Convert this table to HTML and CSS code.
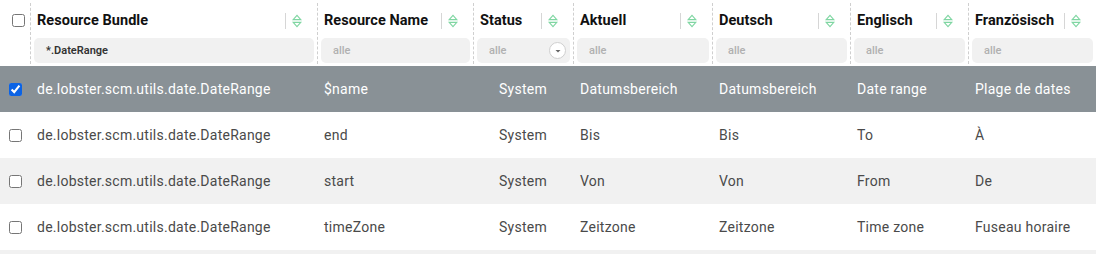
FILE: index.html
```html
<!DOCTYPE html>
<html>
<head>
<meta charset="utf-8">
<link rel="stylesheet" href="styles.css">
</head>
<body>
<div class="table">
  <div class="head">
    <div class="hcell hcheck"><input type="checkbox" class="cb"></div>
    <div class="hcell"><div class="hinner">
      <div class="htitle"><span class="ht">Resource Bundle</span><span class="sdiv"></span><svg class="sort" viewBox="0 0 10 14"><path d="M1.2 5.6 L5 1.3 L8.8 5.6 Z M1.2 8.4 L5 12.7 L8.8 8.4 Z"/></svg></div>
      <div class="filter val">*.DateRange</div>
    </div></div>
    <div class="hcell"><div class="hinner">
      <div class="htitle"><span class="ht">Resource Name</span><span class="sdiv"></span><svg class="sort" viewBox="0 0 10 14"><path d="M1.2 5.6 L5 1.3 L8.8 5.6 Z M1.2 8.4 L5 12.7 L8.8 8.4 Z"/></svg></div>
      <div class="filter">alle</div>
    </div></div>
    <div class="hcell"><div class="hinner">
      <div class="htitle"><span class="ht">Status</span><span class="sdiv"></span><svg class="sort" viewBox="0 0 10 14"><path d="M1.2 5.6 L5 1.3 L8.8 5.6 Z M1.2 8.4 L5 12.7 L8.8 8.4 Z"/></svg></div>
      <div class="filter sel"><span>alle</span><span class="dd"><svg viewBox="0 0 8 8"><path d="M1.5 3 L6.5 3 L4 5.6 Z"/></svg></span></div>
    </div></div>
    <div class="hcell"><div class="hinner">
      <div class="htitle"><span class="ht">Aktuell</span><span class="sdiv"></span><svg class="sort" viewBox="0 0 10 14"><path d="M1.2 5.6 L5 1.3 L8.8 5.6 Z M1.2 8.4 L5 12.7 L8.8 8.4 Z"/></svg></div>
      <div class="filter">alle</div>
    </div></div>
    <div class="hcell"><div class="hinner">
      <div class="htitle"><span class="ht">Deutsch</span><span class="sdiv"></span><svg class="sort" viewBox="0 0 10 14"><path d="M1.2 5.6 L5 1.3 L8.8 5.6 Z M1.2 8.4 L5 12.7 L8.8 8.4 Z"/></svg></div>
      <div class="filter">alle</div>
    </div></div>
    <div class="hcell"><div class="hinner">
      <div class="htitle"><span class="ht">Englisch</span><span class="sdiv"></span><svg class="sort" viewBox="0 0 10 14"><path d="M1.2 5.6 L5 1.3 L8.8 5.6 Z M1.2 8.4 L5 12.7 L8.8 8.4 Z"/></svg></div>
      <div class="filter">alle</div>
    </div></div>
    <div class="hcell"><div class="hinner">
      <div class="htitle"><span class="ht">Französisch</span><span class="sdiv"></span><svg class="sort" viewBox="0 0 10 14"><path d="M1.2 5.6 L5 1.3 L8.8 5.6 Z M1.2 8.4 L5 12.7 L8.8 8.4 Z"/></svg></div>
      <div class="filter">alle</div>
    </div></div>
  </div>

  <div class="row selected">
    <div class="cell ccheck"><input type="checkbox" class="cb" checked></div>
    <div class="cell">de.lobster.scm.utils.date.DateRange</div>
    <div class="cell">$name</div>
    <div class="cell center">System</div>
    <div class="cell">Datumsbereich</div>
    <div class="cell">Datumsbereich</div>
    <div class="cell">Date range</div>
    <div class="cell">Plage de dates</div>
  </div>
  <div class="row">
    <div class="cell ccheck"><input type="checkbox" class="cb"></div>
    <div class="cell">de.lobster.scm.utils.date.DateRange</div>
    <div class="cell">end</div>
    <div class="cell center">System</div>
    <div class="cell">Bis</div>
    <div class="cell">Bis</div>
    <div class="cell">To</div>
    <div class="cell">À</div>
  </div>
  <div class="row alt">
    <div class="cell ccheck"><input type="checkbox" class="cb"></div>
    <div class="cell">de.lobster.scm.utils.date.DateRange</div>
    <div class="cell">start</div>
    <div class="cell center">System</div>
    <div class="cell">Von</div>
    <div class="cell">Von</div>
    <div class="cell">From</div>
    <div class="cell">De</div>
  </div>
  <div class="row">
    <div class="cell ccheck"><input type="checkbox" class="cb"></div>
    <div class="cell">de.lobster.scm.utils.date.DateRange</div>
    <div class="cell">timeZone</div>
    <div class="cell center">System</div>
    <div class="cell">Zeitzone</div>
    <div class="cell">Zeitzone</div>
    <div class="cell">Time zone</div>
    <div class="cell">Fuseau horaire</div>
  </div>
  <div class="row alt"></div>
</div>
</body>
</html>
```
FILE: styles.css
```css
html, body {
  margin: 0;
  padding: 0;
  background: #fff;
  overflow: hidden;
}
body {
  font-family: Roboto, "Liberation Sans", sans-serif;
  color: #4a4a4a;
}
.table {
  width: 1096px;
  height: 254px;
  overflow: hidden;
}
.head, .row {
  display: grid;
  grid-template-columns: 30px 287px 156px 100px 139px 138px 118px 128px;
}
.head {
  height: 66px;
  background: #fff;
}
.hcell {
  padding-top: 3px;
  box-sizing: border-box;
  height: 66px;
}
.hcheck {
  padding-top: 14px;
  padding-left: 12px;
}
.cb {
  margin: 0;
  width: 13px;
  height: 13px;
  display: block;
  accent-color: #0b63e5;
}
.hinner {
  border-left: 1px dashed #cfcfcf;
  height: 61px;
  display: flex;
  flex-direction: column;
  box-sizing: border-box;
}
.htitle {
  height: 35px;
  display: flex;
  align-items: center;
  padding-left: 6px;
  padding-right: 15px;
}
.ht {
  flex: 1;
  font-weight: 700;
  font-size: 14.5px;
  letter-spacing: 0.05px;
  color: #111;
  white-space: nowrap;
}
.sdiv {
  width: 1px;
  height: 16px;
  background: #d6d6d6;
  margin-right: 6px;
}
.sort {
  width: 10px;
  height: 14px;
  fill: none;
  stroke: #7fd6a2;
  stroke-width: 1.1;
}
.filter {
  margin: 0 3px 0 3px;
  height: 25px;
  background: #f1f1f1;
  border-radius: 5px;
  display: flex;
  align-items: center;
  padding-left: 12px;
  font-size: 11px;
  font-weight: 500;
  color: #b0b0b0;
}
.filter.val {
  color: #333;
  font-weight: 600;
}
.filter.sel {
  justify-content: space-between;
  padding-right: 4px;
}
.dd {
  width: 15px;
  height: 15px;
  border-radius: 50%;
  border: 1px solid #cfcfcf;
  background: #fff;
  display: flex;
  align-items: center;
  justify-content: center;
}
.dd svg {
  width: 8px;
  height: 8px;
  fill: #666;
}
.row {
  height: 46px;
  font-size: 14px;
  letter-spacing: 0.25px;
}
.row.selected {
  background: #899196;
  color: #fff;
}
.row.alt {
  background: #f1f1f1;
}
.cell {
  display: flex;
  align-items: center;
  padding-left: 7px;
  white-space: nowrap;
  overflow: hidden;
}
.cell.center {
  justify-content: center;
  padding-left: 0;
}
.ccheck {
  padding-left: 9px;
}
```
